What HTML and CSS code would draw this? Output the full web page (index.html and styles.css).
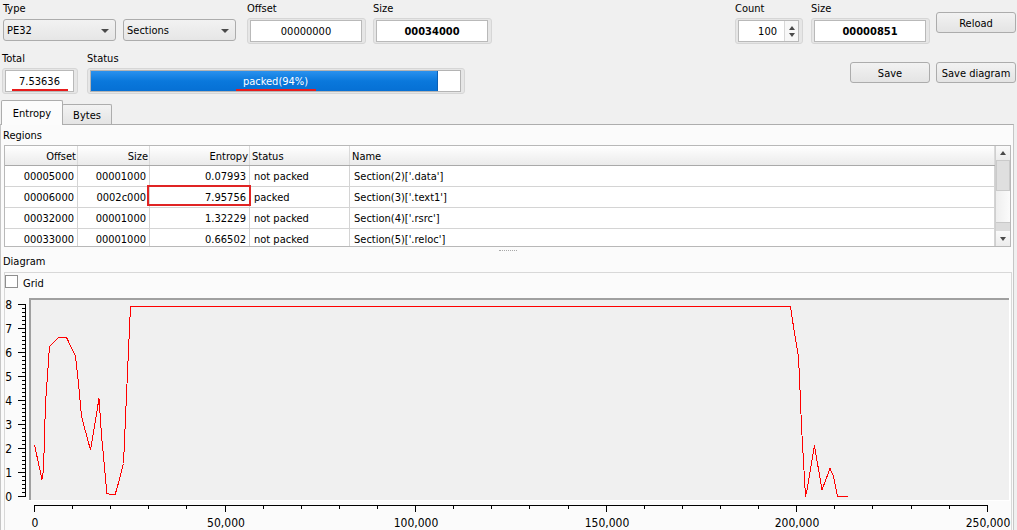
FILE: index.html
```html
<!DOCTYPE html>
<html>
<head>
<meta charset="utf-8">
<link rel="stylesheet" href="styles.css">
</head>
<body>
<div class="top">
  <div class="col">
    <div class="row">
      <div class="grp g-type">
        <div class="lbl">Type</div>
        <div class="combos">
          <div class="combo"><span>PE32</span><span class="darr"></span></div>
          <div class="combo"><span>Sections</span><span class="darr"></span></div>
        </div>
      </div>
      <div class="grp g-offset">
        <div class="lbl">Offset</div>
        <div class="frame w119"><div class="edit">00000000</div></div>
      </div>
      <div class="grp g-size">
        <div class="lbl">Size</div>
        <div class="frame w119"><div class="edit bold">00034000</div></div>
      </div>
    </div>
    <div class="row">
      <div class="grp">
        <div class="lbl">Total</div>
        <div class="frame w76"><div class="edit"><span class="mark">7.53636</span></div></div>
      </div>
      <div class="grp g-status">
        <div class="lbl">Status</div>
        <div class="frame w378">
          <div class="prog">
            <div class="fill" style="width:94%"></div>
            <div class="ptext"><span class="mark">packed(94%)</span></div>
          </div>
        </div>
      </div>
    </div>
  </div>
  <div class="col">
    <div class="row">
      <div class="grp">
        <div class="lbl">Count</div>
        <div class="frame w68">
          <div class="edit spin">
            <span class="sval">100</span>
            <span class="sbtns"><span class="uarr"></span><span class="darr sm"></span></span>
          </div>
        </div>
      </div>
      <div class="grp g-size2">
        <div class="lbl">Size</div>
        <div class="frame w119"><div class="edit bold">00000851</div></div>
      </div>
      <div class="btn b-reload">Reload</div>
    </div>
    <div class="row end">
      <div class="btn">Save</div>
      <div class="btn b-gap">Save diagram</div>
    </div>
  </div>
</div>

<div class="tabs">
  <div class="tab active">Entropy</div>
  <div class="tab">Bytes</div>
</div>
<div class="pane">
  <div class="plbl">Regions</div>
  <div class="table">
    <div class="tmain">
      <div class="trow thead">
        <div class="c r">Offset</div><div class="c r">Size</div><div class="c r">Entropy</div><div class="c">Status</div><div class="c">Name</div>
      </div>
      <div class="trow">
        <div class="c r">00005000</div><div class="c r">00001000</div><div class="c r">0.07993</div><div class="c">not packed</div><div class="c">Section(2)['.data']</div>
      </div>
      <div class="trow">
        <div class="c r">00006000</div><div class="c r">0002c000</div><div class="c r boxed">7.95756</div><div class="c">packed</div><div class="c">Section(3)['.text1']</div>
      </div>
      <div class="trow">
        <div class="c r">00032000</div><div class="c r">00001000</div><div class="c r">1.32229</div><div class="c">not packed</div><div class="c">Section(4)['.rsrc']</div>
      </div>
      <div class="trow">
        <div class="c r">00033000</div><div class="c r">00001000</div><div class="c r">0.66502</div><div class="c">not packed</div><div class="c">Section(5)['.reloc']</div>
      </div>
    </div>
    <div class="vscroll">
      <div class="sb-btn"><span class="uarr"></span></div>
      <div class="sb-thumb"></div>
      <div class="sb-track"></div>
      <div class="sb-page"></div>
      <div class="sb-btn"><span class="darr sm"></span></div>
    </div>
  </div>
  <div class="splitter"><span class="dots"></span></div>
  <div class="plbl dl">Diagram</div>
  <div class="dframe">
    <div class="gridrow"><span class="cbox"></span><span class="cblbl">Grid</span></div>
    <svg class="chart" width="1007" height="240" viewBox="5 290 1007 240" xmlns="http://www.w3.org/2000/svg">
      <rect x="29" y="298" width="981" height="203" fill="#f0f0f0"/>
      <rect x="29" y="298" width="980" height="2" fill="#a0a0a0"/>
      <rect x="29" y="298" width="2" height="203" fill="#a0a0a0"/>
      <rect x="1009" y="298" width="1" height="203" fill="#ffffff"/>
      <rect x="29" y="500" width="981" height="1" fill="#ffffff"/>
      <g fill="#000" shape-rendering="crispEdges">
        <rect x="25" y="304" width="1" height="193"/>
        <rect x="18" y="304" width="7" height="1"/><rect x="22" y="308" width="3" height="1"/><rect x="22" y="312" width="3" height="1"/><rect x="22" y="316" width="3" height="1"/><rect x="22" y="320" width="3" height="1"/><rect x="22" y="324" width="3" height="1"/>
        <rect x="18" y="328" width="7" height="1"/><rect x="22" y="332" width="3" height="1"/><rect x="22" y="336" width="3" height="1"/><rect x="22" y="340" width="3" height="1"/><rect x="22" y="344" width="3" height="1"/><rect x="22" y="348" width="3" height="1"/>
        <rect x="18" y="352" width="7" height="1"/><rect x="22" y="356" width="3" height="1"/><rect x="22" y="360" width="3" height="1"/><rect x="22" y="364" width="3" height="1"/><rect x="22" y="368" width="3" height="1"/><rect x="22" y="372" width="3" height="1"/>
        <rect x="18" y="376" width="7" height="1"/><rect x="22" y="380" width="3" height="1"/><rect x="22" y="384" width="3" height="1"/><rect x="22" y="388" width="3" height="1"/><rect x="22" y="392" width="3" height="1"/><rect x="22" y="396" width="3" height="1"/>
        <rect x="18" y="400" width="7" height="1"/><rect x="22" y="404" width="3" height="1"/><rect x="22" y="408" width="3" height="1"/><rect x="22" y="412" width="3" height="1"/><rect x="22" y="416" width="3" height="1"/><rect x="22" y="420" width="3" height="1"/>
        <rect x="18" y="424" width="7" height="1"/><rect x="22" y="428" width="3" height="1"/><rect x="22" y="432" width="3" height="1"/><rect x="22" y="436" width="3" height="1"/><rect x="22" y="440" width="3" height="1"/><rect x="22" y="444" width="3" height="1"/>
        <rect x="18" y="448" width="7" height="1"/><rect x="22" y="452" width="3" height="1"/><rect x="22" y="456" width="3" height="1"/><rect x="22" y="460" width="3" height="1"/><rect x="22" y="464" width="3" height="1"/><rect x="22" y="468" width="3" height="1"/>
        <rect x="18" y="472" width="7" height="1"/><rect x="22" y="476" width="3" height="1"/><rect x="22" y="480" width="3" height="1"/><rect x="22" y="484" width="3" height="1"/><rect x="22" y="488" width="3" height="1"/><rect x="22" y="492" width="3" height="1"/>
        <rect x="18" y="496" width="7" height="1"/>

        <rect x="34" y="505" width="954" height="1"/>
        <rect x="34" y="505" width="1" height="7"/><rect x="72" y="505" width="1" height="4"/><rect x="110" y="505" width="1" height="4"/><rect x="148" y="505" width="1" height="4"/><rect x="186" y="505" width="1" height="4"/>
        <rect x="225" y="505" width="1" height="7"/><rect x="263" y="505" width="1" height="4"/><rect x="301" y="505" width="1" height="4"/><rect x="339" y="505" width="1" height="4"/><rect x="377" y="505" width="1" height="4"/>
        <rect x="415" y="505" width="1" height="7"/><rect x="453" y="505" width="1" height="4"/><rect x="491" y="505" width="1" height="4"/><rect x="529" y="505" width="1" height="4"/><rect x="568" y="505" width="1" height="4"/>
        <rect x="606" y="505" width="1" height="7"/><rect x="644" y="505" width="1" height="4"/><rect x="682" y="505" width="1" height="4"/><rect x="720" y="505" width="1" height="4"/><rect x="758" y="505" width="1" height="4"/>
        <rect x="796" y="505" width="1" height="7"/><rect x="834" y="505" width="1" height="4"/><rect x="872" y="505" width="1" height="4"/><rect x="911" y="505" width="1" height="4"/><rect x="949" y="505" width="1" height="4"/>
        <rect x="987" y="505" width="1" height="7"/>
      </g>
      <g class="ylab" text-anchor="end">
        <text x="12" y="309">8</text>
        <text x="12" y="333">7</text>
        <text x="12" y="357">6</text>
        <text x="12" y="381">5</text>
        <text x="12" y="405">4</text>
        <text x="12" y="429">3</text>
        <text x="12" y="453">2</text>
        <text x="12" y="477">1</text>
        <text x="12" y="501">0</text>
      </g>
      <g class="xlab" text-anchor="middle">
        <text x="35" y="527">0</text>
        <text x="226" y="527">50,000</text>
        <text x="416" y="527">100,000</text>
        <text x="607" y="527">150,000</text>
        <text x="797" y="527">200,000</text>
        <text x="988" y="527">250,000</text>
      </g>
      <polyline fill="none" stroke="#ff0000" stroke-width="1" shape-rendering="crispEdges"
        points="34.5,445 42,479.5 43.5,470 45.5,403 47.5,375 49.5,346.5 58.5,337.5 66.5,337.5 75.5,356 78.5,383.5 81.5,416.5 90.5,450 99,398.5 101.5,435 106,483.5 106.5,493.5 115,495 117.5,486.5 123.5,463.5 126,406.5 128.5,350 130.5,306.5 790.5,306.5 794.5,333.5 798.5,356.5 800,390 801.5,426.5 803.5,461.5 805.5,496.5 807,490 811.5,463.5 814.5,445.5 817.5,463.5 822,490 830,468.5 833.5,476.5 837.5,496 847.5,496"/>
    </svg>
  </div>
</div>
</body>
</html>
```

FILE: styles.css
```css
* { box-sizing: border-box; }
html, body { margin: 0; padding: 0; }
body {
  width: 1017px;
  height: 530px;
  overflow: hidden;
  background: #f0f0f0;
  color: #000;
  font-family: "DejaVu Sans Condensed", "Liberation Sans", sans-serif;
  font-size: 11px;
  line-height: 13px;
}

.top {
  display: flex;
  justify-content: space-between;
  padding: 2px 1px 0 2px;
}
.col { display: flex; flex-direction: column; gap: 8px; }
.row { display: flex; align-items: flex-start; }
.row.end { justify-content: flex-end; }
.grp { display: flex; flex-direction: column; }
.lbl { height: 16px; line-height: 13px; white-space: nowrap; }

.g-type { margin-left: 1px; }
.g-offset { margin-left: 11px; }
.g-size { margin-left: 7px; }
.g-status { margin-left: 9px; }
.g-size2 { margin-left: 8px; }

.combos { display: flex; gap: 7px; margin-top: 1px; }
.combo {
  width: 113px;
  height: 22px;
  border: 1px solid #acacac;
  border-radius: 3px;
  background: linear-gradient(#f2f2f2, #e6e6e6);
  display: flex;
  align-items: center;
  justify-content: space-between;
  padding: 1px 6px 0 3px;
}
.darr {
  width: 0; height: 0;
  border-left: 4px solid transparent;
  border-right: 4px solid transparent;
  border-top: 4px solid #4a4a4a;
}
.uarr {
  width: 0; height: 0;
  border-left: 4px solid transparent;
  border-right: 4px solid transparent;
  border-bottom: 4px solid #4a4a4a;
}
.darr.sm, .uarr { border-left-width: 3.5px; border-right-width: 3.5px; }

.frame {
  height: 26px;
  padding: 1px 3px 1px 2px;
  border: 1px solid #d6d6d6;
  border-radius: 3px;
  background: #e6e6e6;
}
.w119 { width: 119px; }
.w76 { width: 76px; }
.w68 { width: 68px; }
.w378 { width: 378px; }

.edit {
  height: 22px;
  background: #fff;
  border: 1px solid #b9b9b9;
  display: flex;
  align-items: center;
  justify-content: center;
  padding-top: 1px;
  white-space: nowrap;
}
.bold { font-weight: bold; }

.spin { justify-content: flex-end; padding-top: 0; }
.sval { padding-right: 7px; padding-top: 1px; }
.sbtns {
  width: 14px;
  height: 100%;
  border-left: 1px solid #d8d8d8;
  display: flex;
  flex-direction: column;
  align-items: center;
  justify-content: center;
  gap: 3px;
  background: #f7f7f7;
}

.mark { position: relative; }
.mark::after {
  content: "";
  position: absolute;
  left: -7px;
  right: -8px;
  bottom: -3px;
  height: 2px;
  background: #e81c1c;
}

.prog {
  height: 22px;
  background: #fff;
  border: 1px solid #b4b4b4;
  display: grid;
}
.fill, .ptext { grid-area: 1 / 1; }
.fill {
  height: 100%;
  background: linear-gradient(#2a91ee, #0a78dc 50%, #0670d4);
  border-right: 1px solid #0a5fb4;
}
.ptext {
  display: flex;
  align-items: center;
  justify-content: center;
  padding-top: 1px;
  color: #fff;
}

.btn {
  width: 80px;
  height: 21px;
  margin-top: 10px;
  padding-top: 1px;
  border: 1px solid #acacac;
  border-radius: 3px;
  background: linear-gradient(#f2f2f2, #e4e4e4);
  display: flex;
  align-items: center;
  justify-content: center;
  white-space: nowrap;
}
.b-reload { margin-left: 6px; }
.b-gap { margin-left: 6px; }

.tabs {
  display: flex;
  align-items: flex-end;
  height: 24px;
  margin-top: 6px;
  padding-left: 1px;
}
.tab {
  width: 50px;
  height: 20px;
  margin-left: -1px;
  border: 1px solid #adadad;
  border-bottom: none;
  border-radius: 2px 2px 0 0;
  background: linear-gradient(#f3f3f3, #e4e4e4);
  text-align: center;
  line-height: 21px;
}
.tab.active {
  width: 62px;
  height: 25px;
  margin-left: 0;
  margin-bottom: -1px;
  background: #fcfcfc;
  line-height: 25px;
  position: relative;
  z-index: 2;
}

.pane {
  width: 1014px;
  height: 420px;
  border: 1px solid #c6c6c6;
  border-top-color: #adadad;
  background: #fbfbfb;
  padding: 4px 0 0 2px;
}
.plbl { height: 16px; line-height: 13px; }
.plbl.dl { height: 17px; }

.table {
  display: flex;
  width: 1007px;
  height: 102px;
  margin-left: 1px;
  border: 1px solid #b8b8b8;
  background: #fff;
}
.tmain { flex: 1; height: 100px; overflow: hidden; }
.trow {
  display: grid;
  grid-template-columns: 73px 72px 100px 100px 1fr;
  height: 21px;
  border-bottom: 1px solid #d4d4d4;
}
.thead {
  height: 20px;
  background: linear-gradient(#ffffff, #ebebeb);
  border-bottom: 1px solid #a9a9a9;
}
.c {
  display: flex;
  align-items: center;
  padding: 1px 3px 0 4px;
  border-right: 1px solid #d4d4d4;
  white-space: nowrap;
  overflow: visible;
}
.c.r { justify-content: flex-end; padding: 1px 3px 0 0; }
.thead .c { padding-left: 2px; border-right-color: #dadada; }
.thead .c.r { padding: 1px 1px 0 0; }
.boxed { position: relative; }
.boxed::after {
  content: "";
  position: absolute;
  top: -2px;
  left: -3px;
  right: -2px;
  bottom: 1px;
  border: 2px solid #e02424;
  z-index: 3;
}

.vscroll {
  width: 15px;
  height: 100px;
  display: flex;
  flex-direction: column;
  border-left: 1px solid #cfcfcf;
  background: #f5f5f5;
}
.sb-btn {
  height: 14px;
  display: flex;
  align-items: center;
  justify-content: center;
  background: linear-gradient(#fafafa, #ececec);
}
.sb-btn:last-child { height: 15px; }
.sb-thumb {
  height: 31px;
  background: #dfdfdf;
  border: 1px solid #cacaca;
}
.sb-track { flex: 1; background: linear-gradient(90deg, #eeeeee, #fbfbfb); }
.sb-page { height: 9px; background: #dcdcdc; border-top: 1px solid #c8c8c8; }

.splitter {
  height: 8px;
  display: flex;
  justify-content: center;
  padding-top: 3px;
}
.dots {
  width: 18px;
  height: 0;
  border-top: 1px dotted #a8a8a8;
}

.dframe {
  width: 1008px;
  height: 270px;
  margin-left: 1px;
  border: 1px solid #d8d8d8;
}
.gridrow {
  height: 17px;
  display: flex;
  align-items: center;
  padding-top: 1px;
}
.cbox {
  width: 13px;
  height: 13px;
  border: 1px solid #8f8f8f;
  background: #fff;
  margin-top: -1px;
}
.cblbl { margin-left: 5px; padding-top: 2px; }

.chart { display: block; }
.ylab, .xlab {
  font-family: "DejaVu Sans Condensed", "Liberation Sans", sans-serif;
  font-size: 12px;
  fill: #000;
}
```
